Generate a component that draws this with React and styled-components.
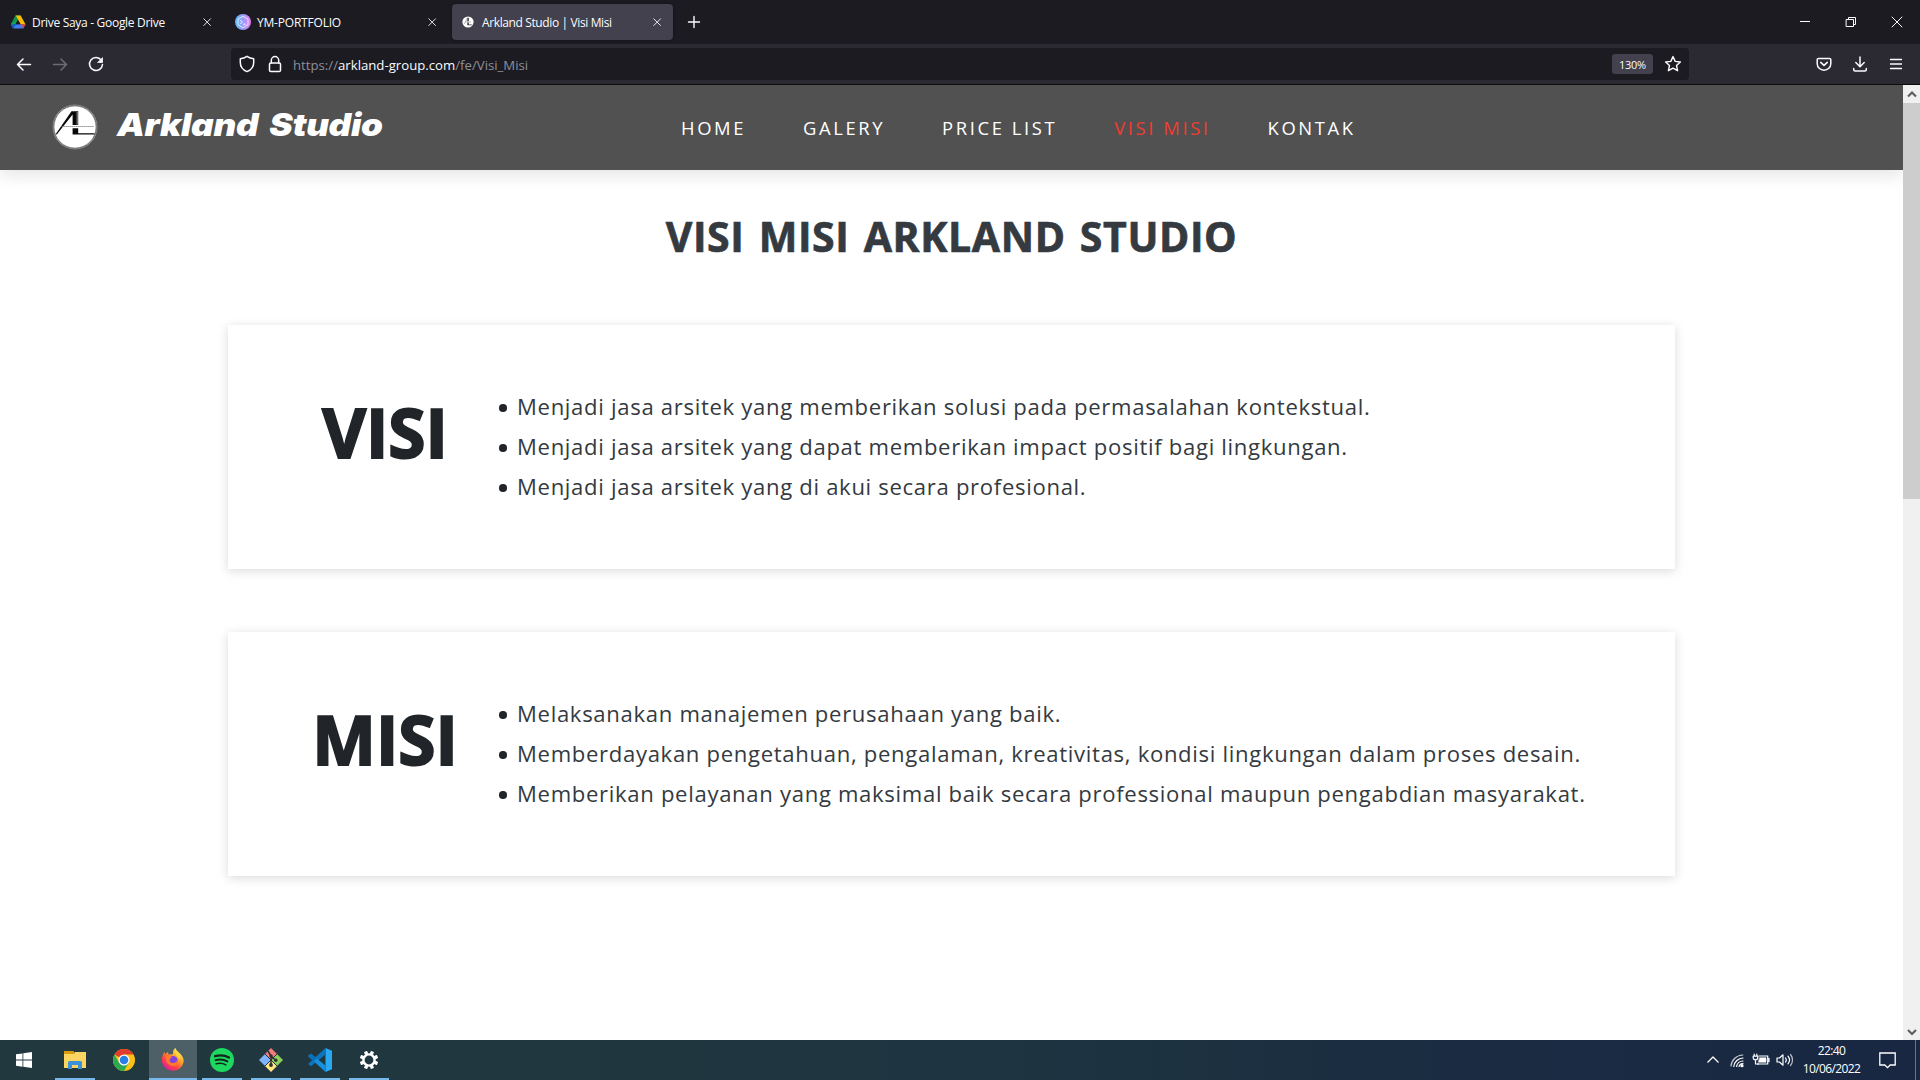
import React from 'react';
import styled, { createGlobalStyle } from 'styled-components';

const GlobalStyle = createGlobalStyle`
  * { box-sizing: border-box; }
  html, body { margin: 0; padding: 0; overflow: hidden; }
  body { font-family: 'Open Sans', 'Noto Sans', sans-serif; }
  svg { display: block; flex: none; overflow: visible; }
`;

const Screen = styled.div`
  width: 1920px;
  height: 1080px;
  display: flex;
  flex-direction: column;
  background: #fff;
  overflow: hidden;
`;

/* ---------- browser chrome ---------- */

const TabStrip = styled.div`
  height: 44px;
  flex: none;
  display: flex;
  align-items: center;
  background: #1c1b22;
  color: #fbfbfe;
`;

const Tab = styled.div`
  width: ${(p) => p.$width}px;
  height: 36px;
  display: flex;
  align-items: center;
  margin-right: 4px;
  padding: 0 11px 0 ${(p) => p.$inset}px;
  border-radius: 4px;
  background: ${(p) => (p.$active ? '#42414d' : 'transparent')};
  box-shadow: ${(p) => (p.$active ? '0 0 3px rgba(0,0,0,.5)' : 'none')};
`;

const TabTitle = styled.span`
  flex: 1;
  margin-left: 6px;
  padding-top: 2px;
  font-size: 12px;
  line-height: 18px;
  letter-spacing: ${(p) => p.$tracking}px;
  white-space: nowrap;
`;

const NewTab = styled.div`
  margin-left: 10px;
`;

const WindowControls = styled.div`
  margin-left: auto;
  display: flex;
  align-items: center;
  gap: 36px;
  padding-right: 18px;
`;

const Toolbar = styled.div`
  height: 41px;
  flex: none;
  display: flex;
  align-items: center;
  padding: 0 14px 1px 14px;
  background: #2b2a33;
  border-bottom: 1px solid #0c0c0d;
`;

const HistoryButtons = styled.div`
  width: 217px;
  display: flex;
  gap: 16px;
`;

const UrlBar = styled.div`
  width: 1458px;
  height: 32px;
  display: flex;
  align-items: center;
  padding: 0 6px;
  border-radius: 4px;
  background: #1c1b22;
`;

const UrlIcons = styled.div`
  display: flex;
  gap: 8px;
`;

const Url = styled.span`
  flex: 1;
  margin-left: 8px;
  padding-top: 2px;
  font-size: 13.2px;
  line-height: 20px;
  color: #8f8f98;
`;

const UrlHost = styled.span`
  color: #fbfbfe;
`;

const ZoomBadge = styled.span`
  width: 41px;
  height: 20px;
  margin-right: 10px;
  border-radius: 3px;
  background: #42414d;
  color: #fbfbfe;
  font-size: 11px;
  letter-spacing: -0.3px;
  line-height: 22px;
  text-align: center;
`;

const ToolbarActions = styled.div`
  margin-left: auto;
  display: flex;
  gap: 16px;
`;

/* ---------- web page ---------- */

const Viewport = styled.div`
  height: 955px;
  flex: none;
  display: flex;
`;

const Page = styled.main`
  width: 1903px;
  display: flex;
  flex-direction: column;
  overflow: hidden;
  background: #fff;
`;

const Header = styled.header`
  height: 85px;
  flex: none;
  display: flex;
  align-items: center;
  padding-left: 52px;
  background: #515151;
  box-shadow: 0 5px 16px rgba(0, 0, 0, 0.11);
`;

const Brand = styled.div`
  width: 629px;
  display: flex;
  align-items: center;
  padding-bottom: 2px;
`;

const BrandName = styled.span`
  margin-left: 19px;
  padding-bottom: 4px;
  font: italic 900 31.5px/40px Inter, sans-serif;
  letter-spacing: -0.3px;
  word-spacing: 4px;
  color: #fff;
  white-space: nowrap;
  transform: scaleX(1.115);
  transform-origin: left center;
`;

const Nav = styled.nav`
  display: flex;
  gap: 57px;
`;

const NavLink = styled.a`
  font-size: 18.4px;
  line-height: 26px;
  letter-spacing: 2.6px;
  color: ${(p) => (p.$active ? '#f03c2e' : '#fff')};
  white-space: nowrap;
`;

const Title = styled.h1`
  margin: 41px 0 64px;
  font: 700 41px/50px 'Open Sans', sans-serif;
  letter-spacing: 0.6px;
  word-spacing: 3px;
  text-align: center;
  color: #343a40;
  -webkit-text-stroke: 0.7px #343a40;
`;

const Card = styled.section`
  width: 1447px;
  height: 244px;
  flex: none;
  display: flex;
  margin: 0 0 63px 228px;
  padding: 61px 60px;
  background: #fff;
  box-shadow: 0 2px 10px rgba(0, 0, 0, 0.15);
`;

const CardHeading = styled.h2`
  width: 194px;
  margin: 5px 18px 0 0;
  font: 700 67.5px/82px 'Open Sans', sans-serif;
  text-align: center;
  color: #212529;
  -webkit-text-stroke: 2px #212529;
`;

const List = styled.ul`
  margin: 0;
  padding: 0;
  list-style: none;
`;

const Item = styled.li`
  height: 40px;
  display: flex;
  align-items: center;
  font-size: 22.1px;
  line-height: 40px;
  letter-spacing: 0.68px;
  color: #343a40;
  white-space: nowrap;

  &::before {
    content: '';
    width: 7.5px;
    height: 7.5px;
    margin: 4px 10.5px 0 -1px;
    border-radius: 50%;
    background: #212529;
  }
`;

const Scrollbar = styled.div`
  width: 17px;
  display: flex;
  flex-direction: column;
  background: #f0f0f0;
`;

const ScrollArrow = styled.div`
  height: 17px;
  display: grid;
  place-items: center;
`;

const ScrollThumb = styled.div`
  height: 396px;
  margin: 1px 0 auto;
  background: #cdcdcd;
`;

/* ---------- taskbar ---------- */

const Taskbar = styled.footer`
  height: 40px;
  flex: none;
  display: flex;
  background: linear-gradient(90deg, #21383f 0%, #20373f 30%, #1d3340 55%, #1a2b42 80%, #192742 100%);
`;

const TaskButton = styled.div`
  width: 48px;
  height: 40px;
  display: grid;
  place-items: center;
  margin-right: ${(p) => p.$gap || 1}px;
  background-color: ${(p) => (p.$active ? '#4d6067' : 'transparent')};
  background-image: ${(p) => (p.$running ? 'linear-gradient(#76b9ed, #76b9ed)' : 'none')};
  background-repeat: no-repeat;
  background-position: center bottom;
  background-size: ${(p) => (p.$active ? 48 : 40)}px 2px;
`;

const Tray = styled.div`
  margin-left: auto;
  display: flex;
  align-items: center;
`;

const TrayIcons = styled.div`
  display: flex;
  align-items: center;
  gap: 8px;
`;

const Clock = styled.div`
  width: 74px;
  margin: 0 10px 0 2px;
  padding-right: 1px;
  font-size: 12px;
  line-height: 18px;
  letter-spacing: -0.6px;
  color: #fff;
  text-align: center;
`;

const ShowDesktop = styled.div`
  width: 5px;
  height: 40px;
  margin-left: 19px;
  border-left: 1px solid #66738a;
`;

/* ---------- icons ---------- */

const Line = ({ size = 16, box = 16, w = 1.3, color = '#fbfbfe', children }) => (
  <svg width={size} height={size} viewBox={`0 0 ${box} ${box}`} fill="none" stroke={color} strokeWidth={w} strokeLinecap="round" strokeLinejoin="round">
    {children}
  </svg>
);

const CloseIcon = () => (
  <Line size={10} box={10} w={0.9}><path d="M1.800 1.800l6.700 6.700M8.500 1.800L1.800 8.500" /></Line>
);

const DriveIcon = () => (
  <svg width="16" height="16" viewBox="0 0 16 16">
    <path d="M5.600 1.500h5L8 6 3 14.500.8 10.500z" fill="#1ea362" />
    <path d="M5.600 1.500h5l5 9h-5z" fill="#fbbc04" />
    <path d="M5.600 1.500L8 5.800.8 10.500 5.600 1.500z" fill="#12924f" />
    <path d="M3.200 14.600L5.600 10.300h10l-2.400 4.300z" fill="#3f7df0" />
    <path d="M11 10.300h4.600l-2.400 4.300z" fill="#ea4335" />
    <path d="M3.200 14.600L.8 10.500 3.200 10.300h2.400z" fill="#1859c8" />
    <path d="M8 5.800l2.600 4.500H5.500z" fill="#1c1b22" />
  </svg>
);

const PortfolioIcon = () => (
  <svg width="16" height="16" viewBox="0 0 16 16" fill="none">
    <defs>
      <linearGradient id="pf" x1="0" y1="0" x2="1" y2="0">
        <stop offset="0" stopColor="#55bdf8" />
        <stop offset=".6" stopColor="#a797f8" />
        <stop offset="1" stopColor="#ef7af3" />
      </linearGradient>
    </defs>
    <circle cx="8" cy="8" r="8" fill="url(#pf)" />
    <path d="M8 2.300l5 2.900v5.600l-5 2.900-5-2.900V5.200z" stroke="#e8f0ff" strokeWidth=".9" />
    <path d="M5.300 6l2 2-2 2M8 10.200h2.800" stroke="#fff" strokeWidth=".9" />
  </svg>
);

const SmallLogo = () => (
  <svg width="16" height="16" viewBox="0 0 16 16">
    <circle cx="8" cy="8" r="5.600" fill="#fff" />
    <path d="M7.300 3.800h1.500v3.500H7.300zM7.300 8.600h1.500v2h3v.6H7.300z" fill="#333" />
    <path d="M7.300 4L4.300 10M5 7.900h6" stroke="#777" strokeWidth=".5" />
  </svg>
);

const BackIcon = ({ color, flip }) => (
  <Line size={20} box={20} w={1.5} color={color}>
    <path transform={flip ? 'matrix(-1 0 0 1 20 0)' : undefined} d="M16.500 10.500H3.500M9 5L3.500 10.500 9 16" />
  </Line>
);

const ReloadIcon = () => (
  <Line size={20} box={20} w={1.5}>
    <path d="M15.300 6.200A6.500 6.500 0 1 0 16.500 10.500" />
    <path d="M16.500 4v4.500H12z" fill="#fbfbfe" strokeWidth=".8" />
  </Line>
);

const ShieldIcon = () => (
  <Line size={20} box={20} w={1.5}>
    <path d="M10 2.300c2.200 1.500 4.300 2.200 6.700 2.500v3.800c0 4.200-3 7.600-6.700 9-3.700-1.400-6.700-4.800-6.700-9V4.800C5.700 4.500 7.800 3.800 10 2.300z" />
  </Line>
);

const LockIcon = () => (
  <Line size={20} box={20} w={1.5}>
    <rect x="4.500" y="9" width="11" height="8.500" rx="1.300" />
    <path d="M6.300 9V6.300a3.700 3.700 0 0 1 7.400 0V9" />
  </Line>
);

const StarIcon = () => (
  <Line size={20} box={20} w={1.4}>
    <path d="M10 2.600l2.200 4.800 5.200.6-3.900 3.500 1.100 5.200L10 14.100l-4.600 2.600 1.100-5.200L2.600 8l5.200-.6z" />
  </Line>
);

const PocketIcon = () => (
  <Line size={20} box={20} w={1.5}>
    <path d="M4.500 4.500h11a1.300 1.300 0 0 1 1.300 1.300v4a6.800 6.400 0 0 1-13.600 0v-4a1.300 1.300 0 0 1 1.300-1.300z" />
    <path d="M6.700 8.400L10 11.400l3.300-3" />
  </Line>
);

const DownloadIcon = () => (
  <Line size={20} box={20} w={1.5}>
    <path d="M10 3v9.500M5.800 8.500l4.200 4.200 4.200-4.200M3.700 14.500v1a1.500 1.500 0 0 0 1.500 1.500h9.600a1.500 1.500 0 0 0 1.500-1.500v-1" />
  </Line>
);

const MenuIcon = () => (
  <Line size={20} box={20} w={1.3}><path d="M4.500 5.500h11M4.500 10h11M4.500 14.500h11" /></Line>
);

const BrandLogo = () => (
  <svg width="46" height="46" viewBox="0 0 46 46">
    <circle cx="23" cy="23" r="22" fill="#fff" stroke="#888" strokeWidth="1" />
    <circle cx="23" cy="23" r="21.200" fill="none" stroke="#444" strokeWidth=".8" />
    <path d="M19.500 7.200h6.700V21h-5.600V10.500L4.800 30.500l-1.200-.3z" fill="#080808" />
    <path d="M20.600 24.200h5.600v5h16.300v1.300H20.600z" fill="#080808" />
    <path d="M25.200 8v12.500" stroke="#888" strokeWidth="1.200" />
    <path d="M9.500 22.500H42" stroke="#777" strokeWidth="1.200" strokeDasharray="1.200 .8" />
  </svg>
);

const ScrollChevron = ({ down }) => (
  <Line size={10} box={10} w={2.2} color="#606060">
    <path strokeLinecap="butt" strokeLinejoin="miter" d={down ? 'M1 3l4 4 4-4' : 'M1 7.500l4-4 4 4'} />
  </Line>
);

const WindowsIcon = () => (
  <svg width="16" height="16" viewBox="0 0 16 16" fill="#fff">
    <path d="M0 2.300l6.500-.9v6.200H0zM7.300 1.300L16 0v7.600H7.300zM0 8.500h6.500v6.200L0 13.800zM7.300 8.500H16V16l-8.700-1.200z" />
  </svg>
);

const FolderIcon = () => (
  <svg width="22" height="18" viewBox="0 0 22 18">
    <path d="M0 0h9.500l1 1.500V5H0z" fill="#d99a0b" />
    <path d="M0 3h10l1-2h11v16H0z" fill="#fcd462" />
    <path d="M4 18v-6.500a1.500 1.500 0 0 1 1.500-1.500h11a1.500 1.500 0 0 1 1.500 1.500V18h-4v-4H8v4z" fill="#3a93d9" />
  </svg>
);

const ChromeIcon = () => (
  <svg width="22" height="22" viewBox="0 0 22 22">
    <circle cx="11" cy="11" r="11" fill="#fbc116" />
    <path d="M11 11L1.470 5.500A11 11 0 0 1 20.530 5.500H11z" fill="#e33b2e" />
    <path d="M1.470 5.500A11 11 0 0 0 11 22l4.800-8.200L11 16 6.200 13.700z" fill="#2da94f" />
    <circle cx="11" cy="11" r="5.500" fill="#fff" />
    <circle cx="11" cy="11" r="4.300" fill="#2b7de9" />
  </svg>
);

const FirefoxIcon = () => (
  <svg width="24" height="24" viewBox="0 0 24 24">
    <defs>
      <linearGradient id="ffx" x1=".85" y1=".1" x2=".2" y2=".95">
        <stop offset="0" stopColor="#fff44f" />
        <stop offset=".35" stopColor="#ffa32b" />
        <stop offset=".65" stopColor="#ff4b3e" />
        <stop offset="1" stopColor="#e3189b" />
      </linearGradient>
    </defs>
    <path d="M14.500 0c.5 2.500 3 3.500 4.500 5.500 2.500 2.500 4 5 3.600 8.500A11 10.800 0 0 1 .9 13.500C.6 9.500 1.500 6.500 3.500 4l.8 2.300L6.500 4l1.300 2.400 4.200-.2c-.3-2.500.5-5 2.500-6.200z" fill="url(#ffx)" />
    <circle cx="12" cy="12.500" r="4.600" fill="#8442dd" />
    <path d="M4.500 8.500c3-1.500 5-.8 6.500.6l-2 1.800c-1.200 2 .8 4.500 3.600 4 2.500-.5 3.900-1.800 4-4 1.500 3.500-.7 7.100-4.600 7.100-4.500 0-7.500-4.500-7.500-9.500z" fill="#ff7a2d" />
    <path d="M14 2.500c3.500 2.500 5.500 6 5.500 9l-2.800-2.500C15.500 7 13.500 6 14 2.500z" fill="#ffd83a" />
  </svg>
);

const SpotifyIcon = () => (
  <svg width="24" height="24" viewBox="0 0 24 24" fill="none" stroke="#15261c" strokeLinecap="round">
    <circle cx="12" cy="12" r="12" fill="#1ed760" stroke="none" />
    <path d="M5 8.200c5-1.400 10-.9 14 1.300" strokeWidth="2.300" />
    <path d="M5.600 12.200c4.300-1.200 8.400-.7 11.800 1.200" strokeWidth="1.900" />
    <path d="M6.200 15.800c3.500-.9 6.800-.6 9.600 1.100" strokeWidth="1.600" />
  </svg>
);

const GitIcon = () => (
  <svg width="24" height="24" viewBox="0 0 24 24">
    <path d="M12 0l6 6-6 6-6-6z" fill="#f37b7b" />
    <path d="M6 6l6 6-6 6-6-6z" fill="#80b3ff" />
    <path d="M18 6l6 6-6 6-6-6z" fill="#8ccf5c" />
    <path d="M12 12l6 6-6 6-6-6z" fill="#ffe680" />
    <path d="M5.500 5.500l13 13M18.500 5.500l-13 13" stroke="#22383f" strokeWidth="1" />
    <path d="M9 3l3 5v9M12 8l4.500 4" stroke="#303030" strokeWidth="1.500" fill="none" />
    <g fill="#303030"><circle cx="12" cy="8" r="1.700" /><circle cx="12" cy="17" r="1.900" /><circle cx="16.800" cy="12.300" r="1.700" /></g>
  </svg>
);

const VsCodeIcon = () => (
  <svg width="24" height="24" viewBox="0 0 24 24">
    <path d="M17.500 0L24 2.800v18.400L17.500 24z" fill="#29a9f2" />
    <path d="M17.500 0v6.500L3 18.300 0 16z" fill="#0b74bd" />
    <path d="M0 8l3-2.300L17.500 17.500V24z" fill="#168fdc" />
    <path d="M0 8l3-2.300 6 4.800-3.500 2.700z" fill="#0a70b8" />
  </svg>
);

const teeth = [0, 45, 90, 135, 180, 225, 270, 315];
const GearIcon = () => (
  <svg width="20" height="20" viewBox="-10 -10 20 20">
    {teeth.map((a) => (
      <rect key={a} x="-1.700" y="-9.200" width="3.400" height="4" rx=".5" fill="#fff" transform={`rotate(${a + 22.5})`} />
    ))}
    <circle r="5.600" fill="none" stroke="#fff" strokeWidth="2.400" />
  </svg>
);

const TrayChevron = () => (
  <Line w={1.3} color="#fff"><path d="M2.500 10.500L8 5l5.500 5.500" strokeLinecap="butt" /></Line>
);

const WifiIcon = () => (
  <Line w={1.200} color="#fff">
    <path d="M2 14A12 12 0 0 1 13.800 3" opacity=".75" />
    <path d="M4.800 14.500A9.500 9.500 0 0 1 14 6" />
    <path d="M7.600 14.500A6.500 6.500 0 0 1 14 9" />
    <path d="M10 14.500A4 4 0 0 1 14 11.600" />
    <circle cx="13" cy="13.700" r="1" fill="#fff" />
  </Line>
);

const BatteryIcon = () => (
  <Line w={1.200} color="#fff">
    <path d="M6 4h8.700v8H4.500M16 6.300v3.400" strokeLinejoin="miter" />
    <path d="M6.800 5.800H13v4.400H5.500z" fill="#fff" strokeWidth=".6" />
    <path d="M1.200 2v2M3.800 2v2M.2 4.200h4.600v1.300a2.300 2.300 0 0 1-4.600 0zM2.500 8v4h3" />
  </Line>
);

const VolumeIcon = () => (
  <Line w={1.200} color="#fff">
    <path d="M0 6h2.500L6 2.800v10.400L2.500 10H0zM8.500 6a3.200 3.200 0 0 1 0 4M11 4.200a6 6 0 0 1 0 7.600" />
    <path d="M13.500 2.500a8.500 8.500 0 0 1 0 11" opacity=".7" />
  </Line>
);

const NoticeIcon = () => (
  <Line size={17} box={17} w={1.300} color="#fff">
    <path d="M.8 1h15.400v12h-5L8.500 15.700 5.800 13h-5z" strokeLinejoin="miter" />
  </Line>
);

/* ---------- content ---------- */

const tabs = [
  { title: 'Drive Saya - Google Drive', icon: <DriveIcon />, width: 223, inset: 10, tracking: -0.3 },
  { title: 'YM-PORTFOLIO', icon: <PortfolioIcon />, width: 221, inset: 8, tracking: -0.2 },
  { title: 'Arkland Studio | Visi Misi', icon: <SmallLogo />, width: 221, inset: 8, tracking: -0.38, active: true },
];

const links = ['HOME', 'GALERY', 'PRICE LIST', 'VISI MISI', 'KONTAK'];

const sections = [
  {
    heading: 'VISI',
    items: [
      'Menjadi jasa arsitek yang memberikan solusi pada permasalahan kontekstual.',
      'Menjadi jasa arsitek yang dapat memberikan impact positif bagi lingkungan.',
      'Menjadi jasa arsitek yang di akui secara profesional.',
    ],
  },
  {
    heading: 'MISI',
    items: [
      'Melaksanakan manajemen perusahaan yang baik.',
      'Memberdayakan pengetahuan, pengalaman, kreativitas, kondisi lingkungan dalam proses desain.',
      'Memberikan pelayanan yang maksimal baik secara professional maupun pengabdian masyarakat.',
    ],
  },
];

export default function App() {
  return (
    <Screen>
      <GlobalStyle />
      <TabStrip>
        {tabs.map((t) => (
          <Tab key={t.title} $width={t.width} $inset={t.inset} $active={t.active}>
            {t.icon}
            <TabTitle $tracking={t.tracking}>{t.title}</TabTitle>
            <CloseIcon />
          </Tab>
        ))}
        <NewTab>
          <Line size={14} box={14} w={1.4}><path d="M7 1.500v11M1.500 7h11" /></Line>
        </NewTab>
        <WindowControls>
          <Line size={10} box={10} w={1}><path d="M0 4.500h10" strokeLinecap="butt" /></Line>
          <Line size={10} box={10} w={1}><path d="M.5 2.500h7v7h-7zM2.500 2.500v-2h7v7h-2" /></Line>
          <Line size={10} box={10} w={1}><path d="M0 0l10 10M10 0L0 10" /></Line>
        </WindowControls>
      </TabStrip>

      <Toolbar>
        <HistoryButtons>
          <BackIcon color="#fbfbfe" />
          <BackIcon color="#6d6c75" flip />
          <ReloadIcon />
        </HistoryButtons>
        <UrlBar>
          <UrlIcons><ShieldIcon /><LockIcon /></UrlIcons>
          <Url>https://<UrlHost>arkland-group.com</UrlHost>/fe/Visi_Misi</Url>
          <ZoomBadge>130%</ZoomBadge>
          <StarIcon />
        </UrlBar>
        <ToolbarActions>
          <PocketIcon />
          <DownloadIcon />
          <MenuIcon />
        </ToolbarActions>
      </Toolbar>

      <Viewport>
        <Page>
          <Header>
            <Brand>
              <BrandLogo />
              <BrandName>Arkland Studio</BrandName>
            </Brand>
            <Nav>
              {links.map((l) => (
                <NavLink key={l} $active={l === 'VISI MISI'}>{l}</NavLink>
              ))}
            </Nav>
          </Header>
          <Title>VISI MISI ARKLAND STUDIO</Title>
          {sections.map((s) => (
            <Card key={s.heading}>
              <CardHeading>{s.heading}</CardHeading>
              <List>
                {s.items.map((i) => <Item key={i}>{i}</Item>)}
              </List>
            </Card>
          ))}
        </Page>
        <Scrollbar>
          <ScrollArrow><ScrollChevron /></ScrollArrow>
          <ScrollThumb />
          <ScrollArrow><ScrollChevron down /></ScrollArrow>
        </Scrollbar>
      </Viewport>

      <Taskbar>
        <TaskButton $gap={3}><WindowsIcon /></TaskButton>
        <TaskButton $running><FolderIcon /></TaskButton>
        <TaskButton><ChromeIcon /></TaskButton>
        <TaskButton $running $active><FirefoxIcon /></TaskButton>
        <TaskButton $running><SpotifyIcon /></TaskButton>
        <TaskButton $running><GitIcon /></TaskButton>
        <TaskButton $running><VsCodeIcon /></TaskButton>
        <TaskButton $running><GearIcon /></TaskButton>
        <Tray>
          <TrayIcons>
            <TrayChevron />
            <WifiIcon />
            <BatteryIcon />
            <VolumeIcon />
          </TrayIcons>
          <Clock>22:40<br />10/06/2022</Clock>
          <NoticeIcon />
          <ShowDesktop />
        </Tray>
      </Taskbar>
    </Screen>
  );
}
